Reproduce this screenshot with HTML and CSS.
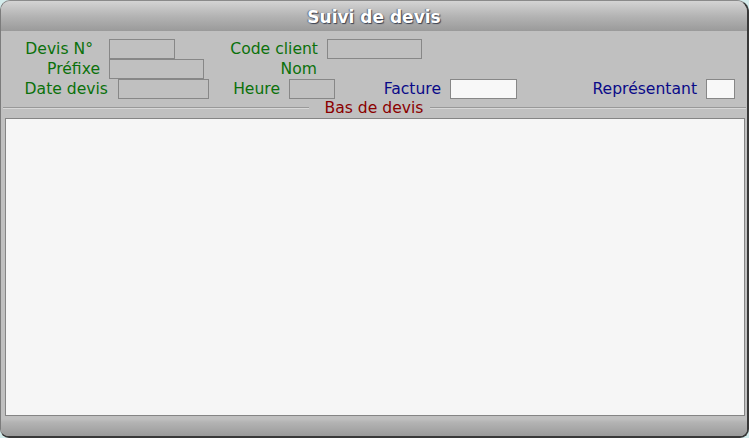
FILE: index.html
```html
<!DOCTYPE html>
<html lang="fr">
<head>
<meta charset="utf-8">
<title>Suivi de devis</title>
<link rel="stylesheet" href="styles.css">
</head>
<body>
<div class="window">
  <div class="titlebar">Suivi de devis</div>
  <div class="form">
    <div class="row">
      <span class="lbl green w-devis">Devis N°</span><span class="box off b-devis"></span>
      <span class="lbl green w-code">Code client</span><span class="box off b-code"></span>
    </div>
    <div class="row">
      <span class="lbl green w-prefixe">Préfixe</span><span class="box off b-prefixe"></span>
      <span class="lbl green w-nom">Nom</span>
    </div>
    <div class="row">
      <span class="lbl green w-date">Date devis</span><span class="box off b-date"></span>
      <span class="lbl green w-heure">Heure</span><span class="box off b-heure"></span>
      <span class="lbl blue w-facture">Facture</span><span class="box on b-facture"></span>
      <span class="lbl blue w-rep">Représentant</span><span class="box on b-rep"></span>
    </div>
  </div>
  <div class="sep"><span class="sep-text">Bas de devis</span></div>
  <div class="panel"></div>
  <div class="footer"></div>
</div>
</body>
</html>
```

FILE: styles.css
```css
html, body {
  margin: 0;
  padding: 0;
  background: #d4ecec;
  width: 749px;
  height: 438px;
  overflow: hidden;
}

.window {
  box-sizing: border-box;
  width: 749px;
  height: 438px;
  display: flex;
  flex-direction: column;
  background: #c0c0c0;
  border-top: 1px solid #8a8a8a;
  border-left: 1px solid #7c7c7c;
  border-right: 2px solid #383838;
  border-bottom: 2px solid #383838;
  border-radius: 10px 12px 9px 9px;
  overflow: hidden;
  font-family: "DejaVu Sans", Verdana, sans-serif;
  font-size: 15.6px;
}

.titlebar {
  height: 30px;
  flex: none;
  background: linear-gradient(#d4d4d4, #b4b4b4 50%, #9a9a9a);
  color: #ffffff;
  font-weight: bold;
  font-size: 17px;
  line-height: 32px;
  text-align: center;
  text-shadow: 1px 1px 1px #3a4050, -1px 0 1px #6a7080;
}

.form {
  flex: none;
  padding-top: 8px;
}

.row {
  display: flex;
  align-items: center;
  height: 20px;
}

.lbl {
  flex: none;
  text-align: right;
  white-space: nowrap;
  line-height: 20px;
}

.green { color: #0b710b; }
.blue { color: #0a0a88; }

.box {
  flex: none;
  box-sizing: border-box;
  height: 20px;
  border: 1px solid #878787;
  margin-left: 9px;
}
.off { background: #c0c0c0; }
.on { background: #f8f8f8; }

.w-devis { width: 92px; }
.b-devis { width: 66px; margin-left: 16px; }
.w-code { width: 143px; }
.b-code { width: 95px; }

.w-prefixe { width: 99px; }
.b-prefixe { width: 95px; }
.w-nom { width: 113px; }

.w-date { width: 107px; }
.b-date { width: 91px; margin-left: 10px; }
.w-heure { width: 71px; }
.b-heure { width: 46px; }
.w-facture { width: 106px; }
.b-facture { width: 67px; }
.w-rep { width: 180px; }
.b-rep { width: 29px; }

.sep {
  flex: none;
  height: 19px;
  display: flex;
  align-items: center;
  padding: 0 1px 1px 2px;
  box-sizing: border-box;
}
.sep::before,
.sep::after {
  content: "";
  height: 0;
  border-top: 1px solid #999999;
  border-bottom: 1px solid #d8d8d8;
}
.sep::before { flex: 1 1 0; }
.sep::after { flex: 1 1 10px; }
.sep-text {
  color: #8b0000;
  padding: 0 7px 0 16px;
  line-height: 16px;
}

.panel {
  flex: 1;
  margin: 0 2px 0 4px;
  background: #f6f6f6;
  border: 1px solid #858585;
}

.footer {
  height: 20px;
  flex: none;
  background: linear-gradient(#c0c0c0 0, #c0c0c0 3px, #b4b4b4 6px, #9a9a9a);
}
```
